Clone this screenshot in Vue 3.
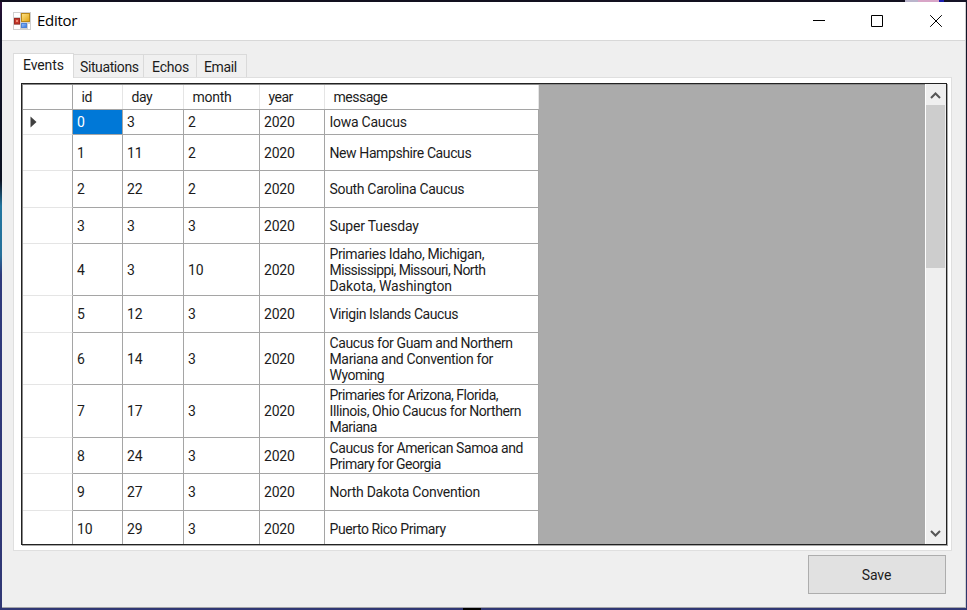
<script setup>
const tabs = [
  { name: 'Events', cls: 'events' },
  { name: 'Situations', cls: 'situations' },
  { name: 'Echos', cls: 'echos' },
  { name: 'Email', cls: 'email' },
]
const columns = ['id', 'day', 'month', 'year', 'message']
// m: message lines, each with its tracking in pixels
const rows = [
  { h: 25, v: [0, 3, 2, 2020], m: [['Iowa Caucus', -.27]] },
  { h: 36, v: [1, 11, 2, 2020], m: [['New Hampshire Caucus', -.4]] },
  { h: 37, v: [2, 22, 2, 2020], m: [['South Carolina Caucus', -.32]] },
  { h: 36, v: [3, 3, 3, 2020], m: [['Super Tuesday', -.16]] },
  { h: 52, v: [4, 3, 10, 2020], m: [['Primaries Idaho, Michigan,', -.38], ['Mississippi, Missouri, North', -.58], ['Dakota, Washington', -.1]] },
  { h: 37, v: [5, 12, 3, 2020], m: [['Virigin Islands Caucus', -.43]] },
  { h: 52, v: [6, 14, 3, 2020], m: [['Caucus for Guam and Northern', -.38], ['Mariana and Convention for', -.35], ['Wyoming', -.5]] },
  { h: 53, v: [7, 17, 3, 2020], m: [['Primaries for Arizona, Florida,', -.48], ['Illinois, Ohio Caucus for Northern', -.4], ['Mariana', -.5]] },
  { h: 36, v: [8, 24, 3, 2020], m: [['Caucus for American Samoa and', -.39], ['Primary for Georgia', -.53]] },
  { h: 37, v: [9, 27, 3, 2020], m: [['North Dakota Convention', -.27]] },
  { h: 37, v: [10, 29, 3, 2020], m: [['Puerto Rico Primary', -.42]] },
]
</script>

<template>
  <div class="desktop">
    <main class="window">
      <header class="titlebar">
        <svg class="app-icon" width="18" height="18" viewBox="0 0 18 18">
          <defs>
            <linearGradient id="gold" x1="0" y1="0" x2="1" y2="1"><stop stop-color="#ffe58a" /><stop offset="1" stop-color="#e0a210" /></linearGradient>
            <linearGradient id="blue" x1="0" y1="0" x2="1" y2="1"><stop stop-color="#9cc4ff" /><stop offset="1" stop-color="#3474dc" /></linearGradient>
          </defs>
          <rect width="18" height="18" fill="#d0d0d0" />
          <path d="M1 1h6v4H1zM1 13h6v4H1zM15 12h2v5h-2z" fill="#fff" />
          <rect x="1.5" y="6.5" width="5" height="5.5" fill="#c63a2c" stroke="#9e2820" />
          <rect x="3" y="8" width="2" height="2" fill="#ef8b77" />
          <rect x="8.5" y="1.5" width="8" height="8" fill="url(#gold)" stroke="#b98718" />
          <rect x="8.5" y="11.5" width="5" height="4" fill="url(#blue)" stroke="#4d83d8" />
        </svg>
        <span class="title">Editor</span>
        <svg class="controls" width="140" height="38" viewBox="0 0 140 38" fill="none" stroke="#000" stroke-width="1">
          <path d="M1 18.5h12M59.5 13.5h11v11h-11z" />
          <path d="M118.2 13.2l11.6 11.6M129.8 13.2l-11.6 11.6" />
        </svg>
      </header>

      <nav class="tabs">
        <div v-for="(t, i) in tabs" :key="t.name" class="tab" :class="[t.cls, { active: i === 0 }]">{{ t.name }}</div>
      </nav>

      <section class="page">
        <div class="viewer">
          <div class="grid">
            <div class="row head">
              <div class="cell"></div>
              <div v-for="c in columns" :key="c" class="cell">{{ c }}</div>
            </div>
            <div v-for="(r, i) in rows" :key="i" class="row" :style="{ height: r.h + 'px' }">
              <div class="cell marker">
                <svg v-if="i === 0" width="7" height="12" viewBox="0 0 7 12"><path d="M.5 .5L6.5 6L.5 11.5z" fill="#404040" /></svg>
              </div>
              <div v-for="(v, k) in r.v" :key="k" class="cell" :class="{ selected: i === 0 && k === 0 }">{{ v }}</div>
              <div class="cell message">
                <div v-for="[line, track] in r.m" :key="line" :style="{ letterSpacing: track + 'px' }">{{ line }}</div>
              </div>
            </div>
          </div>
          <div class="scrollbar">
            <svg class="arrow" width="19" height="21" viewBox="0 0 19 21"><path d="M5 14l4.5-4.5L14 14" /></svg>
            <div class="thumb"></div>
            <svg class="arrow" width="19" height="21" viewBox="0 0 19 21"><path d="M5 8l4.5 4.5L14 8" /></svg>
          </div>
        </div>
      </section>

      <footer class="footer"><button class="save">Save</button></footer>
    </main>
  </div>
</template>

<style>
body { overflow: hidden; }
</style>

<style scoped>
.desktop {
  box-sizing: border-box;
  width: 967px;
  height: 610px;
  padding: 2px 1px 2px 2px;
  background:
    linear-gradient(90deg, transparent 463px, #000 463px, #000 481px, transparent 481px) 0 608px / 967px 2px no-repeat,
    linear-gradient(90deg, #12101f 0 905px, #b9b4cb 905px 918px, #d8a5c7 918px 939px, #1b1cb0 939px 944px, #151326 944px) 0 0 / 967px 2px no-repeat,
    linear-gradient(#30103c 0, #101226 30px, #0b1020 180px, #2276a0 206px, #25709a 255px, #2f3a7c 275px, #303774 100%) 0 0 / 2px 610px no-repeat,
    linear-gradient(#111326, #171a34 50%, #2f376f) 966px 0 / 1px 610px no-repeat,
    #303774;
  font-family: Roboto, "Liberation Sans", sans-serif;
  font-size: 14px;
  color: #1c1c1c;
}
.window {
  box-sizing: border-box;
  display: flex;
  flex-direction: column;
  height: 606px;
  background: #efefef;
  border-right: 1px solid #cfcfcf;
  border-bottom: 1px solid #a4a4a8;
}
.titlebar {
  display: flex;
  align-items: center;
  height: 38px;
  flex: none;
  padding-left: 11px;
  background: #fff;
  border-bottom: 1px solid #d8d8d8;
}
.app-icon { margin-bottom: 1px; }
.title {
  margin-left: 6px;
  padding-bottom: 2px;
  font: 15px "Open Sans", "Noto Sans", sans-serif;
  letter-spacing: -.3px;
  color: #000;
}
.controls { margin-left: auto; margin-right: 13px; }
.tabs {
  display: flex;
  align-items: flex-end;
  height: 36px;
  flex: none;
  padding-left: 11px;
}
.tab {
  box-sizing: border-box;
  height: 23px;
  padding-left: 6px;
  line-height: 25px;
  letter-spacing: -.4px;
  border-top: 1px solid #dadada;
  border-right: 1px solid #dadada;
  background: #f0f0f0;
}
.active {
  position: relative;
  z-index: 1;
  height: 25px;
  margin-bottom: -1px;
  padding-left: 9px;
  line-height: 23px;
  letter-spacing: -.1px;
  background: #fff;
  border-left: 1px solid #dedede;
}
.events { width: 61px; }
.situations { width: 70px; }
.echos { width: 53px; padding-left: 8px; letter-spacing: -.2px; }
.email { width: 50px; padding-left: 7px; }
.page {
  box-sizing: border-box;
  flex: none;
  width: 939px;
  height: 474px;
  margin-left: 11px;
  padding: 5px 4px 5px 7px;
  background: #fff;
  border: 1px solid #dfdfdf;
}
.viewer {
  box-sizing: border-box;
  display: flex;
  width: 926px;
  height: 462px;
  overflow: hidden;
  background: #ababab;
  border: 1px solid #222;
  box-shadow: inset 1px 1px 0 #8a8a8a, 1px 1px 0 #aaa;
}
.grid { width: 517px; padding: 1px 0 0 1px; flex: none; box-sizing: border-box; }
.row {
  box-sizing: border-box;
  display: grid;
  grid-template-columns: 50px 50px 61px 76px 65px 214px;
  border-bottom: 1px solid #a5a5a5;
  background: #fff;
}
.cell {
  box-sizing: border-box;
  display: flex;
  align-items: center;
  padding-left: 4px;
  border-right: 1px solid #a5a5a5;
  white-space: nowrap;
  letter-spacing: -.2px;
}
.row:not(.head) .cell:first-child { border-bottom: 1px solid #e5e5e5; margin-bottom: -1px; }
.head { height: 25px; }
.head .cell { padding-left: 8.5px; border-right-color: #e5e5e5; letter-spacing: -.5px; }
.head .cell:nth-child(4) { letter-spacing: -.25px; }
.head .cell:first-child { border-right-color: #a5a5a5; }
.row .marker { padding-left: 7px; }
.selected { background: #0078d7; color: #fff; }
.message {
  flex-direction: column;
  align-items: flex-start;
  justify-content: center;
  padding-left: 4.5px;
  line-height: 16px;
}
.scrollbar {
  display: flex;
  flex-direction: column;
  box-sizing: border-box;
  width: 21px;
  margin-left: auto;
  padding-right: 1px;
  background: #efefef;
  border-left: 1px solid #fff;
}
.arrow { flex: none; fill: none; stroke: #555; stroke-width: 2; }
.thumb { height: 163px; margin-bottom: auto; background: #cdcdcd; }
.footer { display: flex; justify-content: flex-end; padding: 4px 19px 0 0; }
.save {
  box-sizing: border-box;
  width: 138px;
  height: 39px;
  padding: 0 1px 0 0;
  font: inherit;
  letter-spacing: -.1px;
  color: inherit;
  background: #e1e1e1;
  border: 1px solid #adadad;
}
</style>
